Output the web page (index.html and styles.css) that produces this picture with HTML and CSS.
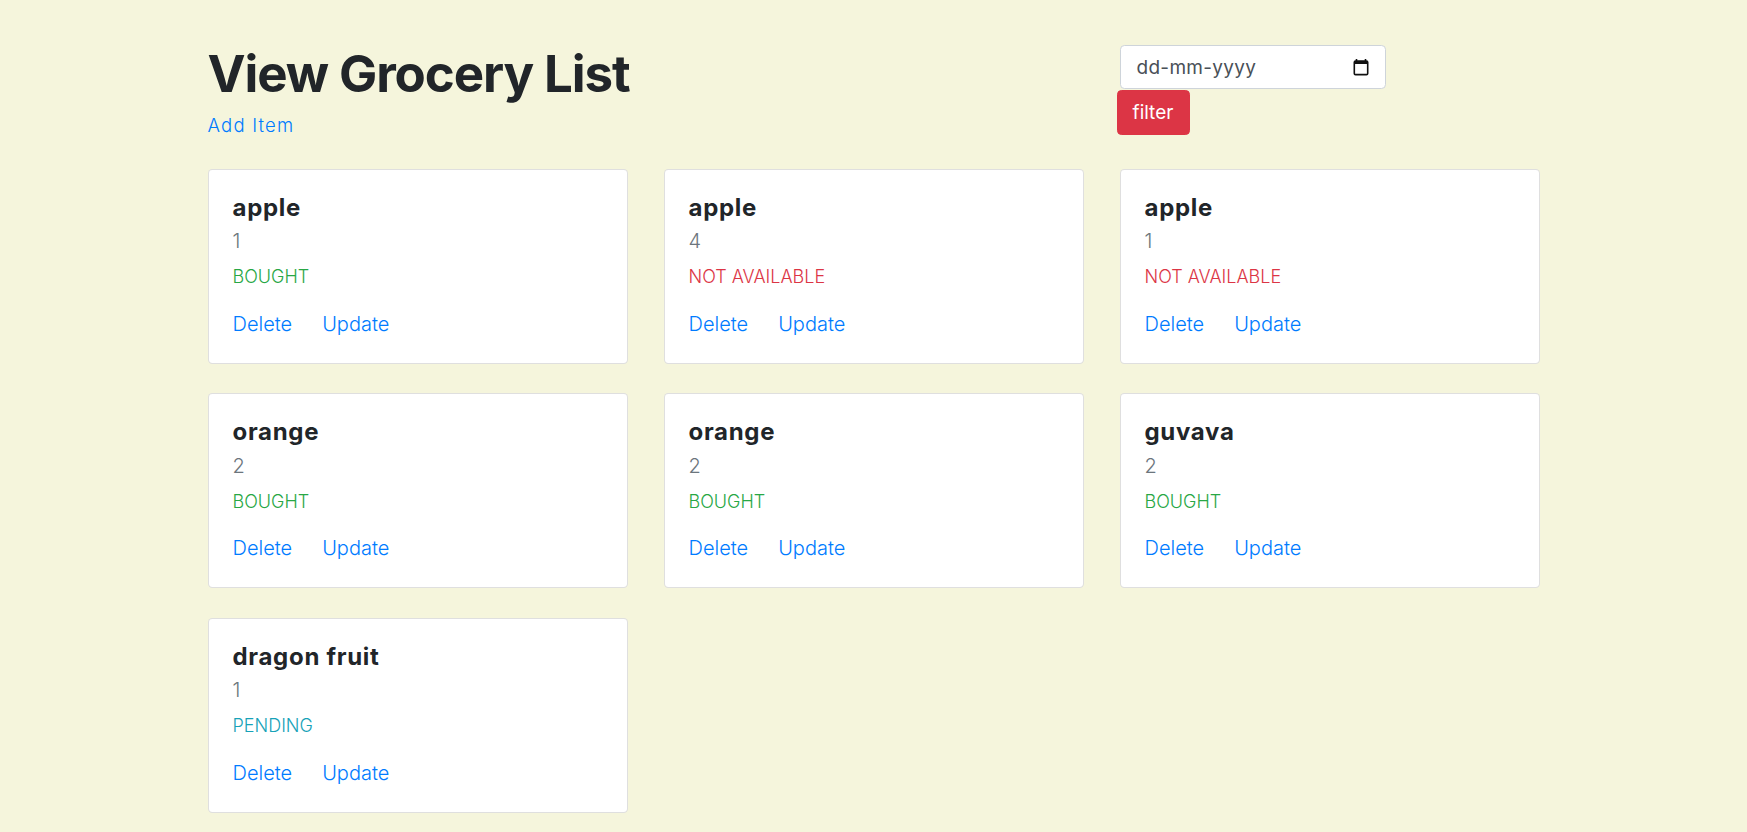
FILE: index.html
```html
<!DOCTYPE html>
<html lang="en">
<head>
<meta charset="utf-8">
<title>View Grocery List</title>
<link rel="stylesheet" href="styles.css">
</head>
<body>
<div class="container">
  <header class="top">
    <div class="top-left">
      <h1 class="title">View Grocery List</h1>
      <a class="link add" href="#">Add Item</a>
    </div>
    <div class="top-right">
      <div class="date-input">
        <span class="date-text">dd-mm-yyyy</span>
        <svg class="cal" width="16" height="18" viewBox="0 0 16 18" aria-hidden="true">
          <path d="M3.5 1v2.5M12.5 1v2.5" stroke="#111" stroke-width="1.6" fill="none"/>
          <rect x="1.3" y="3" width="13.4" height="13.6" rx="1.2" fill="none" stroke="#111" stroke-width="1.6"/>
          <rect x="1.3" y="3" width="13.4" height="3" fill="#111"/>
        </svg>
      </div>
      <button class="btn-filter" type="button">filter</button>
    </div>
  </header>

  <main class="grid">
    <div class="card">
      <h5 class="name">apple</h5>
      <div class="qty">1</div>
      <div class="status bought">BOUGHT</div>
      <div class="actions"><a class="link" href="#">Delete</a><a class="link" href="#">Update</a></div>
    </div>
    <div class="card">
      <h5 class="name">apple</h5>
      <div class="qty">4</div>
      <div class="status na">NOT AVAILABLE</div>
      <div class="actions"><a class="link" href="#">Delete</a><a class="link" href="#">Update</a></div>
    </div>
    <div class="card">
      <h5 class="name">apple</h5>
      <div class="qty">1</div>
      <div class="status na">NOT AVAILABLE</div>
      <div class="actions"><a class="link" href="#">Delete</a><a class="link" href="#">Update</a></div>
    </div>
    <div class="card">
      <h5 class="name">orange</h5>
      <div class="qty">2</div>
      <div class="status bought">BOUGHT</div>
      <div class="actions"><a class="link" href="#">Delete</a><a class="link" href="#">Update</a></div>
    </div>
    <div class="card">
      <h5 class="name">orange</h5>
      <div class="qty">2</div>
      <div class="status bought">BOUGHT</div>
      <div class="actions"><a class="link" href="#">Delete</a><a class="link" href="#">Update</a></div>
    </div>
    <div class="card">
      <h5 class="name">guvava</h5>
      <div class="qty">2</div>
      <div class="status bought">BOUGHT</div>
      <div class="actions"><a class="link" href="#">Delete</a><a class="link" href="#">Update</a></div>
    </div>
    <div class="card">
      <h5 class="name">dragon fruit</h5>
      <div class="qty">1</div>
      <div class="status pending">PENDING</div>
      <div class="actions"><a class="link" href="#">Delete</a><a class="link" href="#">Update</a></div>
    </div>
  </main>
</div>
</body>
</html>
```

FILE: styles.css
```css
* { box-sizing: border-box; }

html, body {
  margin: 0;
  padding: 0;
}

body {
  background: #f5f5dc;
  font-family: Inter, "Open Sans", "Liberation Sans", sans-serif;
  font-weight: 300;
  color: #212529;
}

.container {
  width: 1332px;
  margin: 0 auto;
  padding-top: 43px;
}

.top {
  display: flex;
  align-items: flex-start;
}

.top-left {
  width: 912px;
  display: flex;
  flex-direction: column;
  align-items: flex-start;
}

.title {
  margin: 0;
  font-size: 51px;
  line-height: 61px;
  font-weight: 700;
  letter-spacing: -1.1px;
  color: #212529;
}

.link {
  color: #007bff;
  text-decoration: none;
  font-weight: 300;
}

.add {
  margin-top: 10px;
  font-size: 18.5px;
  line-height: 22px;
  letter-spacing: 1.2px;
}

.top-right {
  display: flex;
  flex-direction: column;
  align-items: flex-start;
  padding-top: 2px;
}

.date-input {
  width: 266px;
  height: 44px;
  background: #fff;
  border: 1px solid #ced4da;
  border-radius: 4.4px;
  display: flex;
  align-items: center;
  justify-content: space-between;
  padding: 0 16px 0 16px;
}

.date-text {
  font-size: 19px;
  font-weight: 400;
  color: #495057;
  letter-spacing: 0.3px;
}

.cal { display: block; }

.btn-filter {
  margin-left: -3px;
  margin-top: 1px;
  width: 73px;
  height: 45px;
  background: #dc3545;
  border: 1px solid #dc3545;
  border-radius: 4.4px;
  color: #fff;
  font-family: inherit;
  font-size: 19px;
  font-weight: 400;
  padding: 0;
}

.grid {
  margin-top: 32.5px;
  display: grid;
  grid-template-columns: repeat(3, 420px);
  column-gap: 36px;
  row-gap: 29.5px;
  padding-bottom: 20px;
}

.card {
  background: #fff;
  border: 1px solid rgba(0, 0, 0, 0.125);
  border-radius: 4.4px;
  padding: 25px 24px 26.6px 24px;
  height: 195px;
}

.name {
  margin: 0;
  font-size: 24px;
  line-height: 26px;
  font-weight: 700;
  letter-spacing: 0.7px;
  color: #212529;
}

.qty {
  margin-top: 8.7px;
  font-size: 20px;
  line-height: 24px;
  color: #6c757d;
}

.status {
  margin-top: 12px;
  font-size: 18px;
  line-height: 24px;
}

.bought { color: #28a745; }
.na { color: #dc3545; }
.pending { color: #17a2b8; }

.actions {
  margin-top: 22.7px;
  display: flex;
  gap: 30px;
  font-size: 20px;
  line-height: 24px;
}
```
